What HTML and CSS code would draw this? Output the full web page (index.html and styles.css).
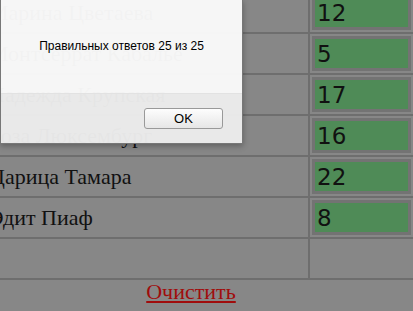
FILE: index.html
```html
<!DOCTYPE html>
<html lang="ru">
<head>
    <meta charset="UTF-8">
    <title>Тест</title>
    <link rel="stylesheet" href="styles.css">
</head>
<body>

    <!-- Answers table -->
    <div class="quiz">
        <div class="row">
            <div class="name">Марина Цветаева</div>
            <div class="answer"><input class="field" value="12"></div>
        </div>
        <div class="row">
            <div class="name">Монтсеррат Кабалье</div>
            <div class="answer"><input class="field" value="5"></div>
        </div>
        <div class="row">
            <div class="name">Надежда Крупская</div>
            <div class="answer"><input class="field" value="17"></div>
        </div>
        <div class="row">
            <div class="name">Роза Люксембург</div>
            <div class="answer"><input class="field" value="16"></div>
        </div>
        <div class="row">
            <div class="name">Царица Тамара</div>
            <div class="answer"><input class="field" value="22"></div>
        </div>
        <div class="row">
            <div class="name">Эдит Пиаф</div>
            <div class="answer"><input class="field" value="8"></div>
        </div>
        <div class="row">
            <div class="name"></div>
            <div class="answer"></div>
        </div>
        <div class="row footer">
            <a href="#" class="clear">Очистить</a>
        </div>
    </div>

    <!-- Alert box -->
    <div class="alert">
        <div class="alert-msg">Правильных ответов 25 из 25</div>
        <div class="alert-buttons">
            <button class="ok">OK</button>
        </div>
    </div>

</body>
</html>
```

FILE: styles.css
```css
body {
    margin: 0;
    background: #878787;
    font-family: 'Liberation Serif', serif;
    overflow: hidden;
    position: relative;
    height: 311px;
}

/* Table */
.quiz {
    width: 446px;
    margin-left: -32px;
    margin-top: -9px;
}

.row {
    display: flex;
    height: 39px;
    border-top: 2px solid #6e6e6e;
}

.name {
    flex: 1;
    display: flex;
    align-items: center;
    padding-left: 21px;
    font-size: 22px;
    color: #111;
    border-right: 2px solid #6e6e6e;
}

.answer {
    width: 104px;
    display: flex;
    align-items: center;
    padding-left: 2px;
    box-sizing: border-box;
}

.field {
    width: 99px;
    height: 35px;
    box-sizing: border-box;
    border: 3px solid #737373;
    background: #4f8b57;
    font-family: 'DejaVu Sans', sans-serif;
    font-size: 23px;
    color: #111;
    padding: 0 0 0 2px;
    outline: none;
}

.footer {
    justify-content: center;
    align-items: flex-start;
}

.clear {
    color: #a00c0c;
    font-size: 22px;
    margin-top: -1px;
}

/* Alert */
.alert {
    position: absolute;
    left: 0;
    top: 0;
    width: 241px;
    border-left: 1px solid #777;
    border-right: 1px solid #777;
    border-bottom: 1px solid #777;
    box-shadow: 0 2px 6px rgba(0, 0, 0, 0.3);
    font-family: 'Liberation Sans', sans-serif;
}

.alert-msg {
    height: 93px;
    box-sizing: border-box;
    padding-top: 39px;
    text-align: center;
    font-size: 12px;
    line-height: 14px;
    color: #000;
    background: rgba(250, 250, 250, 0.97);
}

.alert-buttons {
    height: 50px;
    box-sizing: border-box;
    display: flex;
    justify-content: flex-end;
    padding: 14px 19px 0 0;
    background: rgba(236, 236, 236, 0.97);
    border-top: 1px solid #e2e2e2;
}

.ok {
    width: 79px;
    height: 21px;
    border: 1px solid #999;
    border-radius: 3px;
    background: linear-gradient(#fdfdfd, #e6e6e6);
    font-family: 'Liberation Sans', sans-serif;
    font-size: 13px;
    color: #000;
    padding: 0;
}
```
